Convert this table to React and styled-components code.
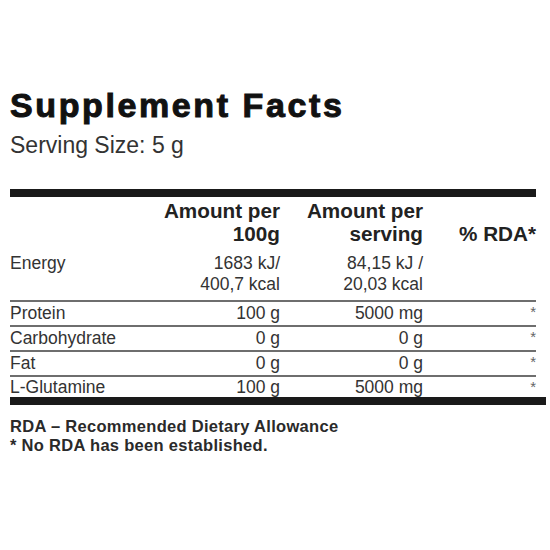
import React from "react";
import styled, { createGlobalStyle } from "styled-components";

const Global = createGlobalStyle`
  html, body { margin: 0; padding: 0; background: #ffffff; }
  body { font-family: "Liberation Sans", Arial, sans-serif; color: #333; }
`;

const Page = styled.div`
  width: 550px;
  height: 550px;
  box-sizing: border-box;
  padding: 86px 14px 0 10px;
`;

const Title = styled.h1`
  margin: 0;
  font-size: 34px;
  line-height: 38px;
  font-weight: 700;
  color: #111;
  letter-spacing: 2.6px;
  -webkit-text-stroke: 1px #111;
`;

const Serving = styled.div`
  margin-top: 7px;
  font-size: 23px;
  line-height: 28px;
  color: #333;
`;

const ThickRule = styled.div`
  height: 8px;
  background: #1a1a1a;
  margin-top: ${(p) => p.$top || 0}px;
  margin-right: ${(p) => (p.$extend ? -10 : 0)}px;
`;

const Row = styled.div`
  display: grid;
  grid-template-columns: 140px 130px 143px 113px;
  align-items: ${(p) => (p.$bottom ? "end" : "start")};
  font-size: ${(p) => (p.$head ? 20.7 : 17.5)}px;
  font-weight: ${(p) => (p.$head ? 700 : 400)};
  line-height: ${(p) => p.$lh}px;
  color: ${(p) => (p.$head ? "#222" : "#333")};
  padding: ${(p) => p.$pad || "0"};
  border-top: ${(p) => (p.$rule ? "2px solid #6e6e6e" : "none")};
`;

const Cell = styled.div`
  text-align: ${(p) => (p.$right ? "right" : "left")};
  white-space: nowrap;
`;

const Star = styled.span`
  font-size: 15px;
  color: #666;
  display: inline-block;
  line-height: 14px;
  vertical-align: top;
  padding-top: 3px;
`;

const Note = styled.div`
  margin-top: 12px;
  font-size: 16.5px;
  line-height: 19px;
  font-weight: 700;
  color: #2a2a2a;
  letter-spacing: 0.3px;
`;

const nutrients = [
  ["Protein", "100 g", "5000 mg"],
  ["Carbohydrate", "0 g", "0 g"],
  ["Fat", "0 g", "0 g"],
  ["L-Glutamine", "100 g", "5000 mg"],
];

export default function App() {
  return (
    <>
      <Global />
      <Page>
        <Title>Supplement Facts</Title>
        <Serving>Serving Size: 5 g</Serving>
        <ThickRule $top={30} />
        <Row $head $bottom $lh={23} $pad="2px 0 0">
          <Cell />
          <Cell $right>
            Amount per
            <br />
            100g
          </Cell>
          <Cell $right>
            Amount per
            <br />
            serving
          </Cell>
          <Cell $right>% RDA*</Cell>
        </Row>
        <Row $lh={21} $pad="8px 0 5px">
          <Cell>Energy</Cell>
          <Cell $right>
            1683 kJ/
            <br />
            400,7 kcal
          </Cell>
          <Cell $right>
            84,15 kJ /
            <br />
            20,03 kcal
          </Cell>
          <Cell />
        </Row>
        {nutrients.map(([name, a, b], i) => {
          const last = i === nutrients.length - 1;
          return (
            <Row key={name} $rule $lh={last ? 20 : 22} $pad={last ? "0" : "0 0 1px"}>
              <Cell>{name}</Cell>
              <Cell $right>{a}</Cell>
              <Cell $right>{b}</Cell>
              <Cell $right>
                <Star>*</Star>
              </Cell>
            </Row>
          );
        })}
        <ThickRule $extend />
        <Note>
          RDA – Recommended Dietary Allowance
          <br />* No RDA has been established.
        </Note>
      </Page>
    </>
  );
}
